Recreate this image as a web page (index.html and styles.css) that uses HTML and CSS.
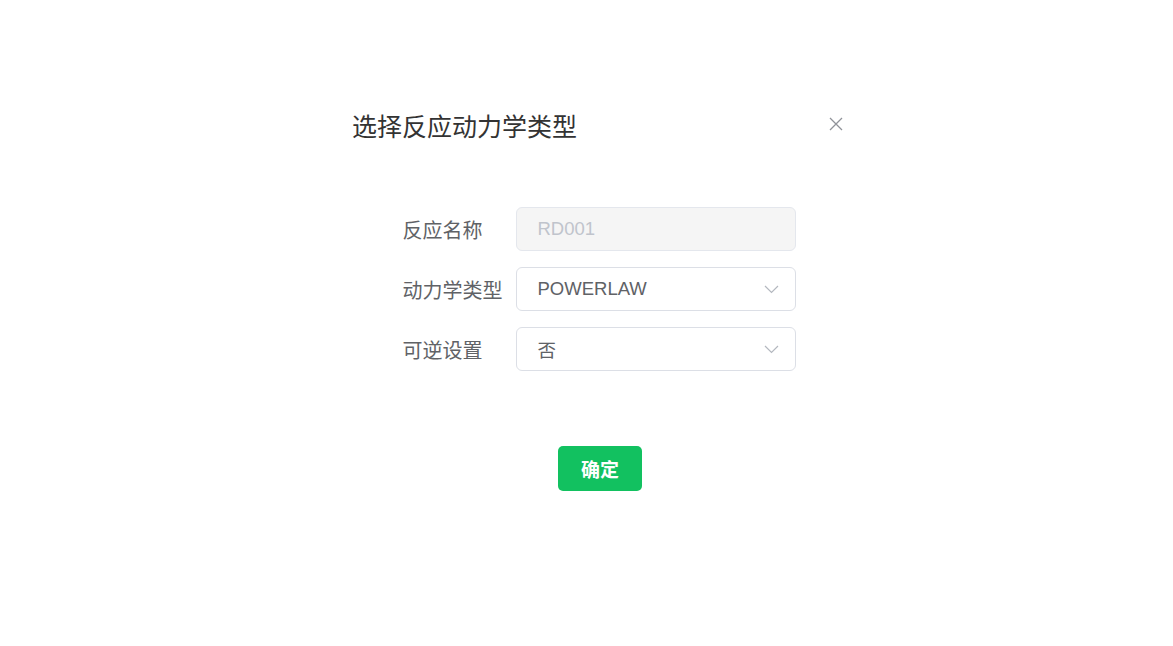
FILE: index.html
```html
<!DOCTYPE html>
<html lang="zh-CN">
<head>
    <meta charset="UTF-8">
    <meta name="viewport" content="width=device-width, initial-scale=1.0">
    <title>选择反应动力学类型</title>
    <link rel="stylesheet" href="styles.css">
</head>
<body>
    <div class="page">
        <div class="dialog">
            <div class="dialog-header">
                <span class="dialog-title">选择反应动力学类型</span>
                <span class="close">
                    <svg width="14" height="14" viewBox="0 0 14 14"><path d="M1 1 L13 13 M13 1 L1 13" stroke="#909399" stroke-width="1.3" fill="none"/></svg>
                </span>
            </div>
            <form class="form">
                <div class="form-row">
                    <label>反应名称</label>
                    <div class="input disabled">RD001</div>
                </div>
                <div class="form-row">
                    <label>动力学类型</label>
                    <div class="input select">
                        <span>POWERLAW</span>
                        <svg width="15" height="9" viewBox="0 0 15 9"><path d="M1 1 L7.5 7.5 L14 1" stroke="#b4b8bf" stroke-width="1.2" fill="none"/></svg>
                    </div>
                </div>
                <div class="form-row">
                    <label>可逆设置</label>
                    <div class="input select">
                        <span>否</span>
                        <svg width="15" height="9" viewBox="0 0 15 9"><path d="M1 1 L7.5 7.5 L14 1" stroke="#b4b8bf" stroke-width="1.2" fill="none"/></svg>
                    </div>
                </div>
            </form>
            <div class="footer">
                <button type="button" class="btn-ok">确定</button>
            </div>
        </div>
    </div>
</body>
</html>
```

FILE: styles.css
```css
body {
    margin: 0;
    background: #fff;
    font-family: "Liberation Sans", "Noto Sans CJK SC", sans-serif;
}
.page {
    display: flex;
    justify-content: center;
    padding: 111px 0 0 27px;
}
.dialog {
    width: 544px;
    box-sizing: border-box;
    padding: 0 29px 0 24px;
}
.dialog-header {
    display: flex;
    justify-content: space-between;
    align-items: center;
    height: 32px;
}
.dialog-title {
    font-size: 25px;
    line-height: 32px;
    color: #333;
}
.close {
    display: flex;
    margin-top: -6px;
}
.form {
    width: 393px;
    margin: 64px auto 0;
    display: flex;
    flex-direction: column;
    gap: 16px;
    padding-left: 3px;
}
.form-row {
    display: flex;
    align-items: center;
}
.form-row label {
    width: 113px;
    font-size: 20px;
    color: #606266;
}
.input {
    width: 280px;
    height: 44px;
    box-sizing: border-box;
    border: 1px solid #dcdfe6;
    border-radius: 6px;
    padding: 0 16px 0 21px;
    display: flex;
    align-items: center;
    justify-content: space-between;
    font-size: 18.5px;
    color: #606266;
}
.input.disabled {
    background: #f5f5f5;
    border-color: #e4e7ed;
    color: #c0c4cc;
}
.footer {
    display: flex;
    justify-content: center;
    margin-top: 75px;
    padding-left: 5px;
}
.btn-ok {
    width: 84px;
    height: 45px;
    border: none;
    border-radius: 5px;
    background: #12c160;
    color: #fff;
    font-size: 19px;
    font-weight: bold;
    font-family: "Liberation Sans", "Noto Sans CJK SC", sans-serif;
}
```
